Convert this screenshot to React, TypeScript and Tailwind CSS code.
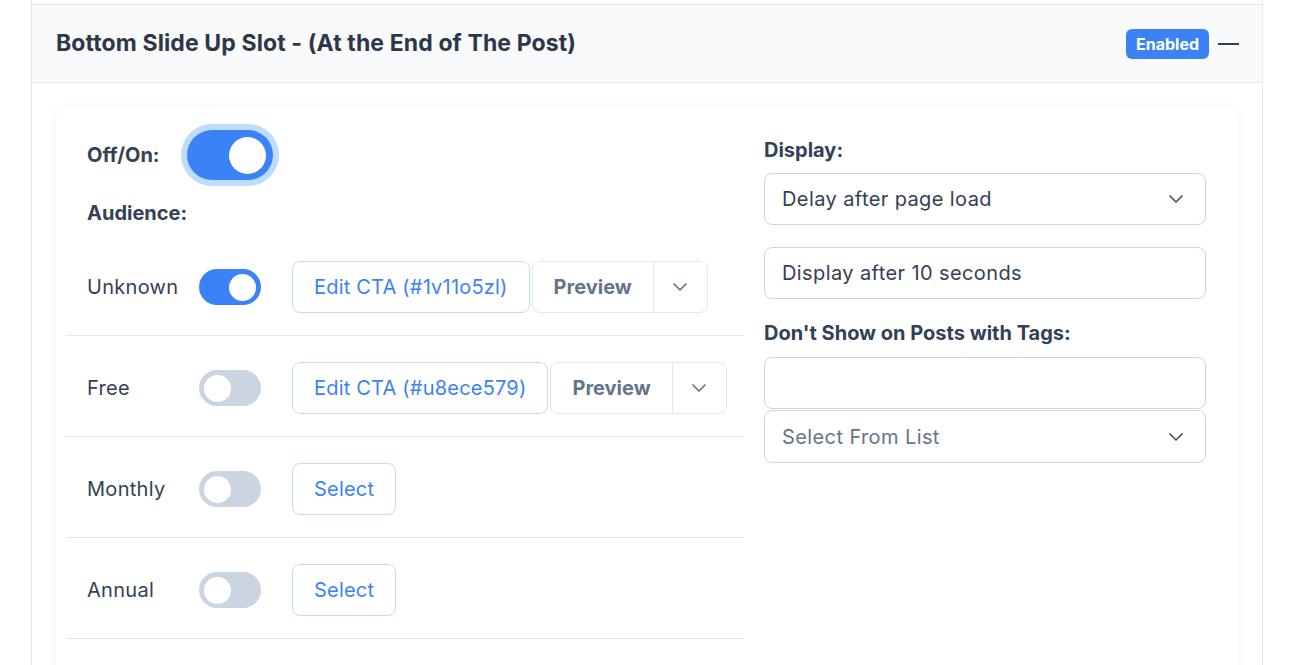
import { ChevronDown } from "lucide-react";

type Row = {
  label: string;
  on: boolean;
  cta?: string;
};

const rows: Row[] = [
  { label: "Unknown", on: true, cta: "Edit CTA (#1v11o5zl)" },
  { label: "Free", on: false, cta: "Edit CTA (#u8ece579)" },
  { label: "Monthly", on: false },
  { label: "Annual", on: false },
];

function Toggle({ on }: { on: boolean }) {
  return (
    <div
      className={`flex h-[36px] w-[62px] shrink-0 items-center rounded-full px-[5px] ${
        on ? "justify-end bg-[#3b82f6]" : "justify-start bg-[#cbd5e1]"
      }`}
    >
      <div className="h-[27px] w-[27px] rounded-full bg-white" />
    </div>
  );
}

function AudienceRow({ row }: { row: Row }) {
  return (
    <div className="flex items-center border-b border-[#e2e8f0] pl-[21px] pt-[26px] pb-[22px]">
      <div className="w-[112px] text-[20px] tracking-[0.015em] text-[#334155]">{row.label}</div>
      <Toggle on={row.on} />
      <div className="ml-[31px] flex items-center gap-[2px]">
        <button className="h-[52px] rounded-lg border border-[#bfdbfe] bg-white px-[21px] text-[20px] tracking-[0.01em] text-[#3b82f6]">
          {row.cta ?? "Select"}
        </button>
        {row.cta && (
          <div className="flex h-[52px] items-stretch rounded-lg border border-[#e2e8f0] bg-white">
            <div className="flex items-center px-[21px] text-[20px] font-bold text-[#64748b]">Preview</div>
            <div className="flex w-[54px] items-center justify-center border-l border-[#e2e8f0]">
              <ChevronDown className="h-[24px] w-[24px] text-[#64748b]" strokeWidth={1.75} />
            </div>
          </div>
        )}
      </div>
    </div>
  );
}

export default function App() {
  return (
    <div className="h-[665px] w-full overflow-hidden bg-white font-['Inter','Noto_Sans',sans-serif]">
      <div className="ml-[31px] w-[1232px] border-x border-[#e2e8f0] pt-[4px]">
        {/* header */}
        <div className="flex h-[79px] items-center justify-between border-y border-[#e2e8f0] bg-[#f8fafc] pl-[24px] pr-[23px]">
          <h2 className="text-[23px] font-bold tracking-[0.005em] text-[#2d3748]">
            Bottom Slide Up Slot - (At the End of The Post)
          </h2>
          <div className="flex items-center gap-[9px]">
            <span className="flex h-[30px] items-center rounded-md bg-[#3b82f6] px-[10px] text-[16px] font-bold text-white">
              Enabled
            </span>
            <span className="block h-[2px] w-[21px] bg-[#334155]" />
          </div>
        </div>

        {/* body */}
        <div className="px-[24px] pt-[25px]">
          <div className="flex h-[600px] rounded-xl bg-white pl-[10px] pr-[32px] shadow-[0_0_12px_rgba(15,23,42,0.05)]">
            {/* left column */}
            <div className="w-[678px]">
              <div className="pl-[21px] pt-[22px]">
                <div className="flex items-center">
                  <span className="text-[20px] font-bold text-[#334155]">Off/On:</span>
                  <div className="ml-[27px] flex h-[50px] w-[86px] items-center justify-end rounded-full bg-[#3b82f6] px-[7px] ring-[6px] ring-[#bfdbfe]">
                    <div className="h-[37px] w-[37px] rounded-full bg-white" />
                  </div>
                </div>
                <div className="mt-[19px] text-[20px] font-bold leading-[28px] text-[#334155]">Audience:</div>
              </div>
              <div className="mt-[8px]">
                {rows.map((r) => (
                  <AudienceRow key={r.label} row={r} />
                ))}
              </div>
            </div>

            {/* right column */}
            <div className="ml-[20px] flex-1 pt-[28px]">
              <div className="text-[20px] font-bold leading-[28px] text-[#334155]">Display:</div>
              <div className="mt-[9px] flex h-[52px] items-center justify-between rounded-lg border border-[#cbd5e1] pl-[17px] pr-[17px] text-[20px] tracking-[0.02em] text-[#334155]">
                <span>Delay after page load</span>
                <ChevronDown className="h-[24px] w-[24px] text-[#475569]" strokeWidth={1.75} />
              </div>
              <div className="mt-[22px] flex h-[52px] items-center rounded-lg border border-[#cbd5e1] pl-[17px] text-[20px] tracking-[0.02em] text-[#334155]">
                Display after 10 seconds
              </div>
              <div className="mt-[20px] text-[20px] font-bold leading-[28px] text-[#334155]">
                Don't Show on Posts with Tags:
              </div>
              <div className="mt-[10px] h-[52px] rounded-lg border border-[#cbd5e1]" />
              <div className="mt-[1px] flex h-[53px] items-center justify-between rounded-lg border border-[#cbd5e1] pl-[17px] pr-[17px] text-[20px] tracking-[0.02em] text-[#64748b]">
                <span>Select From List</span>
                <ChevronDown className="h-[24px] w-[24px] text-[#475569]" strokeWidth={1.75} />
              </div>
            </div>
          </div>
        </div>
      </div>
    </div>
  );
}
